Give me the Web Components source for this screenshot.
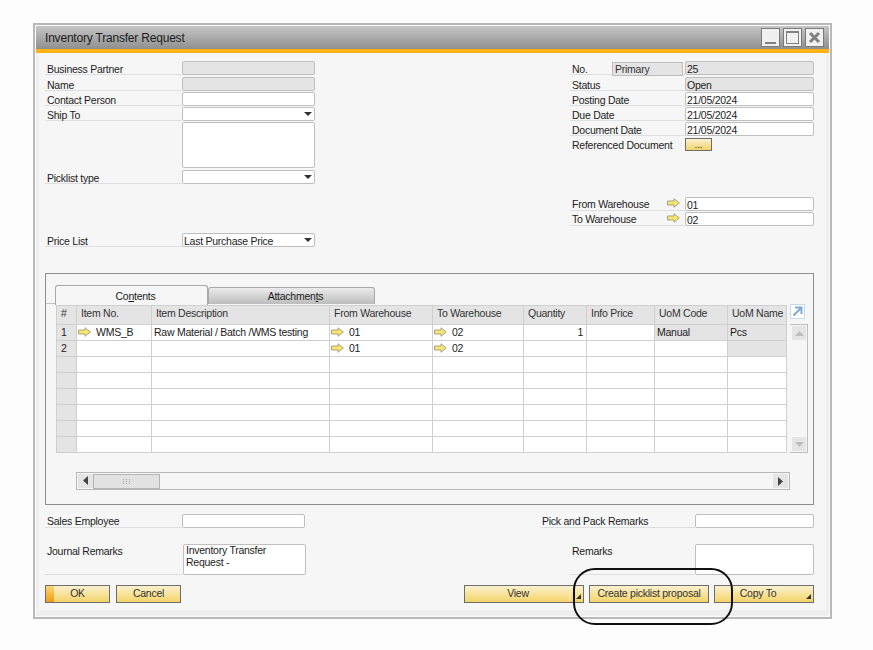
<!DOCTYPE html>
<html>
<head>
<meta charset="utf-8">
<title>Inventory Transfer Request</title>
<style>
  html, body { margin: 0; background: #fdfdfd; }
  body {
    width: 873px;
    height: 650px;
    padding: 23px 0 0 33px;
    box-sizing: border-box;
    position: relative;
    overflow: hidden;
    font: 10.5px "Liberation Sans", Arial, sans-serif;
    letter-spacing: -0.25px;
    color: #1c1c1c;
  }
  .top { display: flex; justify-content: space-between; height: 212px; }
  .col { display: flex; flex-direction: column; }
  .left { width: 270px; }
  .right { width: 244px; }
  .mt2 { margin-top: 2px; }
  .mt1 { margin-top: 1px; }
  .foot { display: flex; justify-content: space-between; margin-top: 9px; }
  .foot-left { width: 261px; }
  .foot-right { width: 274px; }
  .actions { display: flex; margin-top: 10px; }
  .spacer { flex: 1; }
</style>
</head>
<body>
<sb-window title="Inventory Transfer Request">
  <div class="top">
    <div class="col left">
      <sb-field label="Business Partner" kind="readonly" label-width="137"></sb-field>
      <sb-field class="mt2" label="Name" kind="readonly" label-width="137"></sb-field>
      <sb-field class="mt1" label="Contact Person" label-width="137"></sb-field>
      <sb-field class="mt1" label="Ship To" kind="dropdown" label-width="137"></sb-field>
      <sb-field class="mt1" label="" blank label-width="137" height="46"></sb-field>
      <sb-field style="margin-top:2px" label="Picklist type" kind="dropdown" label-width="137"></sb-field>
      <sb-field style="margin-top:49px" label="Price List" kind="dropdown" value="Last Purchase Price" label-width="137"></sb-field>
    </div>
    <div class="col right">
      <sb-field label="No." value="25" kind="readonly" label-width="115" tag="Primary"></sb-field>
      <sb-field class="mt2" label="Status" value="Open" kind="readonly" label-width="115"></sb-field>
      <sb-field class="mt1" label="Posting Date" value="21/05/2024" label-width="115"></sb-field>
      <sb-field class="mt1" label="Due Date" value="21/05/2024" label-width="115"></sb-field>
      <sb-field class="mt1" label="Document Date" value="21/05/2024" label-width="115"></sb-field>
      <sb-field class="mt2" label="Referenced Document" kind="action" tight label-width="115"></sb-field>
      <sb-field style="margin-top:45px" label="From Warehouse" value="01" link tight label-width="115"></sb-field>
      <sb-field class="mt1" label="To Warehouse" value="02" link tight label-width="115"></sb-field>
    </div>
  </div>
  <sb-tabs></sb-tabs>
  <div class="foot">
    <div class="col foot-left">
      <sb-field style="margin-right:1px" label="Sales Employee" tight label-width="137"></sb-field>
      <sb-field style="margin-top:16px" label="Journal Remarks" label-width="138" height="31" value="Inventory Transfer Request -" multiline></sb-field>
    </div>
    <div class="col foot-right">
      <sb-field label="Pick and Pack Remarks" tight label-width="155"></sb-field>
      <sb-field style="margin-top:16px;margin-left:30px" label="Remarks" label-width="125" height="31"></sb-field>
    </div>
  </div>
  <div class="actions">
    <sb-button width="65" accent>OK</sb-button>
    <sb-button width="65" style="margin-left:6px">Cancel</sb-button>
    <div class="spacer"></div>
    <sb-button width="120" menu divider>View</sb-button>
    <sb-button width="120" style="margin-left:5px">Create picklist proposal</sb-button>
    <sb-button width="100" menu style="margin-left:5px">Copy To</sb-button>
  </div>
</sb-window>
<sb-callout></sb-callout>

<script>
const arrowSvg = `<svg width="13" height="10" viewBox="0 0 13 10"><path d="M.5 3h6.5V.7L12.3 5 7 9.3V7H.5z" fill="#f5e66f" stroke="#a8a383" stroke-width="1"/></svg>`;

class SbArrow extends HTMLElement {
  constructor() {
    super();
    this.attachShadow({ mode: "open" });
    this.shadowRoot.innerHTML = `<style>:host{display:inline-flex;align-items:center}</style>${arrowSvg}`;
  }
}

class SbWindow extends HTMLElement {
  constructor() {
    super();
    this.attachShadow({ mode: "open" });
    this.shadowRoot.innerHTML = `
      <style>
        :host {
          display: block;
          box-sizing: border-box;
          width: 799px;
          height: 596px;
          border: 2px solid #b9b9b9;
          padding: 1px;
          background: #fbfbfb;
        }
        #bar {
          height: 23px;
          display: flex;
          align-items: center;
          justify-content: space-between;
          padding: 0 5px 0 9px;
          background: linear-gradient(#c6c6c6, #8f8f8f);
          border-bottom: 4px solid #fcb415;
          color: #1d1d22;
          font-size: 12px;
          letter-spacing: -0.2px;
        }
        #btns { display: flex; gap: 3px; }
        .b {
          width: 19px;
          height: 19px;
          box-sizing: border-box;
          border: 1px solid #7b7b7b;
          background: #f0f0f0;
          display: flex;
          align-items: center;
          justify-content: center;
        }
        #body {
          height: 563px;
          box-sizing: border-box;
          border: solid #efefef;
          border-width: 0 3px 6px;
          padding: 8px 12px 0 6px;
          background: #f6f6f6;
        }
      </style>
      <div id="bar">
        <span id="title"></span>
        <div id="btns">
          <div class="b"><svg width="15" height="15"><rect x="2" y="12" width="11" height="2" fill="#808080"/></svg></div>
          <div class="b"><svg width="15" height="15"><rect x="1.5" y="1.5" width="12" height="12" fill="none" stroke="#808080" stroke-width="1"/><rect x="1" y="1" width="13" height="2" fill="#808080"/></svg></div>
          <div class="b"><svg width="15" height="15"><path d="M3 3l9 9M12 3l-9 9" stroke="#808080" stroke-width="3"/></svg></div>
        </div>
      </div>
      <div id="body"><slot></slot></div>
    `;
    this.shadowRoot.querySelector("#title").textContent = this.getAttribute("title");
  }
}

class SbField extends HTMLElement {
  constructor() {
    super();
    this.attachShadow({ mode: "open" });
    const kind = this.getAttribute("kind") || "input";
    const h = this.getAttribute("height") || 14;
    const lw = this.getAttribute("label-width") || 137;
    const blank = this.hasAttribute("blank");
    const multi = this.hasAttribute("multiline");
    const label = this.getAttribute("label") || "";
    const value = this.getAttribute("value") || "";
    const tag = this.getAttribute("tag");
    const link = this.hasAttribute("link");
    const tight = this.hasAttribute("tight") || h > 14;
    let control = `<div id="box" class="${kind}"><span class="val">${value}</span>${kind === "dropdown" ? `<i></i>` : ""}</div>`;
    if (kind === "action") control = `<sb-button width="27" height="13" small>...</sb-button>`;
    this.shadowRoot.innerHTML = `
      <style>
        :host { display: flex; align-items: stretch; height: ${h}px; line-height: 14px; }
        #label {
          width: ${lw}px;
          flex: none;
          box-sizing: border-box;
          padding: ${tight ? "0" : "1px"} 2px 0 2px;
          border-bottom: ${blank || kind === "action" ? "0" : "1px solid #dcdfe0"};
          display: flex;
          justify-content: space-between;
          align-items: flex-start;
          white-space: nowrap;
        }
        #tag {
          width: 71px;
          height: 14px;
          box-sizing: border-box;
          border: 1px solid #bdbdbd;
          background: #e4e4e4;
          padding-left: 2px;
          line-height: 12px;
          color: #333;
        }
        #box {
          flex: 1;
          box-sizing: border-box;
          border: 1px solid #bfbfbf;
          border-radius: 2px;
          background: #fff;
          display: flex;
          padding: 1px 1px 0;
          position: relative;
          white-space: nowrap;
          line-height: 13px;
        }
        #box.readonly { background: #e4e4e4; }
        #box.dropdown i {
          position: absolute;
          right: 2px;
          top: 4px;
          width: 0;
          height: 0;
          border: 4px solid transparent;
          border-top: 4px solid #333;
          border-bottom: 0;
        }
        .multi { white-space: normal !important; padding: 0 2px !important; line-height: 12px !important; }
        .multi .val { width: 100px; margin-top: -1px; }
        #arr { margin: 1px 3px 0 0; }
      </style>
      <div id="label"><span>${label}</span>${tag ? `<div id="tag">${tag}</div>` : ""}${link ? `<sb-arrow id="arr"></sb-arrow>` : ""}</div>
      ${control}
    `;
    if (multi) this.shadowRoot.querySelector("#box").classList.add("multi");
  }
}

class SbButton extends HTMLElement {
  constructor() {
    super();
    this.attachShadow({ mode: "open" });
    const w = this.getAttribute("width");
    const h = this.getAttribute("height") || 18;
    const menu = this.hasAttribute("menu");
    this.shadowRoot.innerHTML = `
      <style>
        :host {
          display: flex;
          align-items: center;
          justify-content: center;
          position: relative;
          flex: none;
          box-sizing: border-box;
          width: ${w}px;
          height: ${h}px;
          padding-right: ${menu ? 12 : 0}px;
          border: 1px solid #6d6d6d;
          background: linear-gradient(#fbf1cf, #f4d468);
          color: #333;
          white-space: nowrap;
        }
        #accent {
          position: absolute;
          left: 0;
          top: 0;
          bottom: 0;
          width: 8px;
          background: linear-gradient(#fbd873, #f29a17);
        }
        #menu {
          position: absolute;
          right: 2px;
          bottom: 3px;
          width: 0;
          height: 0;
          border-left: 5px solid transparent;
          border-bottom: 5px solid #333;
        }
        #divider {
          position: absolute;
          right: 13px;
          top: 1px;
          bottom: 1px;
          width: 1px;
          background: #fbeeb9;
        }
        span { position: relative; top: -1px; }
      </style>
      ${this.hasAttribute("accent") ? `<div id="accent"></div>` : ""}
      ${this.hasAttribute("divider") ? `<div id="divider"></div>` : ""}
      ${menu ? `<div id="menu"></div>` : ""}
      <span><slot></slot></span>
    `;
  }
}

class SbGrid extends HTMLElement {
  constructor() {
    super();
    this.attachShadow({ mode: "open" });
    const widths = [20, 75, 178, 103, 91, 63, 68, 73, 59];
    const heads = ["#", "Item No.", "Item Description", "From Warehouse", "To Warehouse", "Quantity", "Info Price", "UoM Code", "UoM Name"];
    const empty = ["", "", "", "", "", "", "", "", ""];
    const rows = [
      ["1", { a: "WMS_B" }, "Raw Material / Batch /WMS testing", { a: "01" }, { a: "02" }, { r: "1" }, "", { g: "Manual" }, { g: "Pcs" }],
      ["2", "", "", { a: "01" }, { a: "02" }, "", "", "", { g: "" }],
      empty, empty, empty, empty, empty, empty,
    ];
    const cell = (c, i) => {
      if (i === 0) return `<div class="c n">${c}</div>`;
      if (c.a !== undefined) return `<div class="c a"><sb-arrow></sb-arrow><span class="al">${c.a}</span></div>`;
      if (c.r !== undefined) return `<div class="c r">${c.r}</div>`;
      if (c.g !== undefined) return `<div class="c g">${c.g}</div>`;
      return `<div class="c">${c}</div>`;
    };
    this.shadowRoot.innerHTML = `
      <style>
        :host {
          display: grid;
          grid-template-columns: ${widths.map((w) => w + "px").join(" ")};
          grid-template-rows: 19px;
          grid-auto-rows: 16px;
          flex: none;
          width: ${widths.reduce((a, b) => a + b)}px;
          border-top: 1px solid #cfcfcf;
          border-left: 1px solid #cfcfcf;
          white-space: nowrap;
        }
        .c {
          box-sizing: border-box;
          border-right: 1px solid #cfcfcf;
          border-bottom: 1px solid #cfcfcf;
          padding: 0 1px 1px 2px;
          display: flex;
          align-items: center;
          background: #fff;
          overflow: hidden;
        }
        .h { background: #e4e4e4; padding: 0 0 4px 4px; color: #333; }
        .h:first-child { justify-content: center; padding: 0 0 4px; }
        .n { background: #e4e4e4; padding-left: 4px; }
        .g { background: #e4e4e4; }
        .a { padding-left: 1px; }
        .r { justify-content: flex-end; padding-right: 3px; }
        .al { margin-left: 5px; }
      </style>
      ${heads.map((h) => `<div class="c h">${h}</div>`).join("")}
      ${rows.map((r) => r.map(cell).join("")).join("")}
    `;
  }
}

class SbVScroll extends HTMLElement {
  constructor() {
    super();
    this.attachShadow({ mode: "open" });
    this.shadowRoot.innerHTML = `
      <style>
        :host { display: block; width: 18px; flex: none; margin: -1px 0 0 3px; }
        svg { display: block; }
        #track {
          margin-top: 5px;
          height: 129px;
          box-sizing: border-box;
          border: 1px solid #bdbdbd;
          border-left: 0;
          padding: 1px 1px 1px 2px;
          display: flex;
          flex-direction: column;
          justify-content: space-between;
        }
        .b { height: 14px; width: 14px; background: #e4e4e4; display: flex; align-items: center; justify-content: center; }
      </style>
      <svg width="15" height="15" viewBox="0 0 15 15">
        <rect x=".5" y=".5" width="14" height="14" fill="#fff" stroke="#c5d9ea"/>
        <path d="M3.5 11.5L10.5 4.5M5 3.5h6.5v6.5" fill="none" stroke="#7fa9cf" stroke-width="2"/>
      </svg>
      <div id="track">
        <div class="b"><svg width="9" height="5"><path d="M0 5L4.5 0 9 5z" fill="#bdbdbd"/></svg></div>
        <div class="b"><svg width="9" height="5"><path d="M0 0L4.5 5 9 0z" fill="#bdbdbd"/></svg></div>
      </div>
    `;
  }
}

class SbHScroll extends HTMLElement {
  constructor() {
    super();
    this.attachShadow({ mode: "open" });
    this.shadowRoot.innerHTML = `
      <style>
        :host {
          display: flex;
          align-items: center;
          justify-content: space-between;
          box-sizing: border-box;
          width: 714px;
          height: 18px;
          margin-left: 21px;
          border: 1px solid #b8b8b8;
          padding: 0 1px;
          background: #f6f6f6;
        }
        .b { width: 15px; height: 14px; background: #e4e4e4; display: flex; align-items: center; justify-content: center; }
        #thumb {
          width: 67px;
          height: 15px;
          box-sizing: border-box;
          border: 1px solid #b4b4b4;
          background: #e2e2e2;
          display: flex;
          align-items: center;
          justify-content: center;
        }
        #l { display: flex; }
      </style>
      <div id="l">
        <div class="b"><svg width="5" height="9"><path d="M5 0L0 4.5 5 9z" fill="#444"/></svg></div>
        <div id="thumb"><svg width="9" height="7"><path d="M1 1h1v1H1zM4 1h1v1H4zM7 1h1v1H7zM1 3h1v1H1zM4 3h1v1H4zM7 3h1v1H7zM1 5h1v1H1zM4 5h1v1H4zM7 5h1v1H7z" fill="#a0a0a0"/></svg></div>
      </div>
      <div class="b"><svg width="5" height="9"><path d="M0 0L5 4.5 0 9z" fill="#444"/></svg></div>
    `;
  }
}

class SbTabs extends HTMLElement {
  constructor() {
    super();
    this.attachShadow({ mode: "open" });
    this.shadowRoot.innerHTML = `
      <style>
        :host {
          display: block;
          box-sizing: border-box;
          height: 232px;
          border: 1px solid #8e8e8e;
          padding: 11px 8px 0 9px;
          background: #f6f6f6;
        }
        #strip { display: flex; align-items: flex-end; height: 20px; margin-left: -9px; }
        #edge { width: 9px; height: 2px; border-bottom: 1px solid #c4c4c4; margin-bottom: 1px; }
        .t {
          box-sizing: border-box;
          display: flex;
          align-items: center;
          justify-content: center;
          padding-left: 8px;
          border: 1px solid #a8a8a8;
          border-bottom: 0;
          border-radius: 3px 3px 0 0;
        }
        #a { width: 153px; height: 20px; background: #f6f6f6; }
        #b { width: 167px; height: 17px; margin-bottom: 1px; background: linear-gradient(#ececec, #bcbcbc); }
        #g { display: flex; margin-left: 1px; }
        u { text-underline-offset: 1px; }
      </style>
      <div id="strip">
        <div id="edge"></div>
        <div class="t" id="a"><span>Co<u>n</u>tents</span></div>
        <div class="t" id="b"><span>Attachmen<u>t</u>s</span></div>
      </div>
      <div id="g"><sb-grid></sb-grid><sb-vscroll></sb-vscroll></div>
      <sb-hscroll style="margin-top:19px"></sb-hscroll>
    `;
  }
}

class SbCallout extends HTMLElement {
  constructor() {
    super();
    this.attachShadow({ mode: "open" });
    this.shadowRoot.innerHTML = `
      <style>
        :host {
          position: absolute;
          left: 573px;
          top: 568px;
          width: 160px;
          height: 57px;
          box-sizing: border-box;
          border: 2px solid #111;
          border-radius: 22px;
        }
      </style>
    `;
  }
}

customElements.define("sb-arrow", SbArrow);
customElements.define("sb-button", SbButton);
customElements.define("sb-window", SbWindow);
customElements.define("sb-field", SbField);
customElements.define("sb-grid", SbGrid);
customElements.define("sb-vscroll", SbVScroll);
customElements.define("sb-hscroll", SbHScroll);
customElements.define("sb-tabs", SbTabs);
customElements.define("sb-callout", SbCallout);
</script>
</body>
</html>
